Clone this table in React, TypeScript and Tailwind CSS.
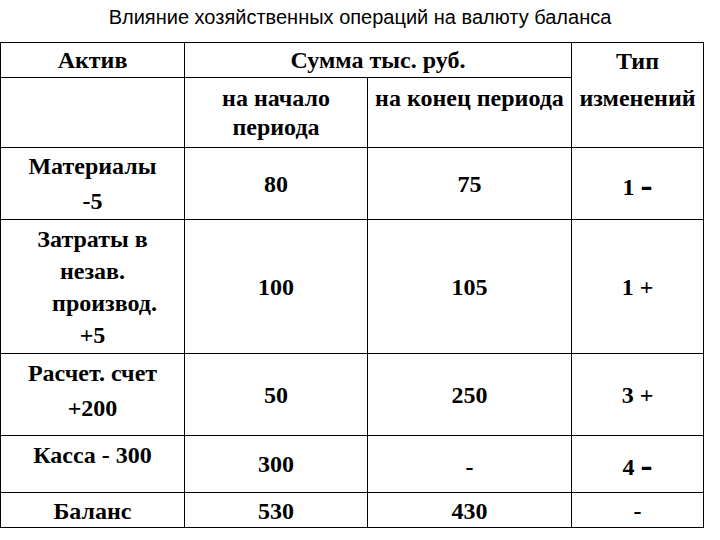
import React from 'react';

function Minus() {
  return <span className="font-bold text-[24px] font-['DejaVu_Sans',sans-serif]">–</span>;
}

export default function App() {
  const cell = 'border border-black text-center p-0';

  return (
    <div className="w-[720px] h-[540px] bg-white text-black overflow-hidden">
      {/* Title */}
      <div className="h-[42px] pt-[6px] text-center text-[20px] leading-[22px] font-['Liberation_Sans',Arial,sans-serif]">
        Влияние хозяйственных операций на валюту баланса
      </div>

      <table className="w-[703px] table-fixed border-collapse font-bold text-[24px] font-['Liberation_Serif','Times_New_Roman',serif]">
        <colgroup>
          <col className="w-[184px]" />
          <col className="w-[183px]" />
          <col className="w-[204px]" />
          <col className="w-[132px]" />
        </colgroup>
        <tbody>
          {/* Header row 1 */}
          <tr>
            <td className={`${cell} h-[35px] align-middle leading-[28px]`}>Актив</td>
            <td colSpan={2} className={`${cell} h-[35px] align-middle leading-[28px]`}>Сумма тыс. руб.</td>
            <td rowSpan={2} className={`${cell} align-top leading-[28px]`}>
              <div className="h-[35px] flex items-center justify-center">Тип</div>
              <div className="pt-[6px]">изменений</div>
            </td>
          </tr>
          {/* Header row 2 */}
          <tr>
            <td className={`${cell} h-[70px]`}></td>
            <td className={`${cell} h-[70px] align-top pt-[6px] leading-[29px]`}>
              на начало
              <br />
              периода
            </td>
            <td className={`${cell} h-[70px] align-top pt-[6px] leading-[29px]`}>на конец периода</td>
          </tr>

          {/* Материалы */}
          <tr>
            <td className={`${cell} h-[72px] align-middle leading-[35px]`}>
              Материалы
              <br />
              -5
            </td>
            <td className={`${cell} h-[72px] align-middle`}>80</td>
            <td className={`${cell} h-[72px] align-middle`}>75</td>
            <td className={`${cell} h-[72px] align-middle pt-[6px]`}>
              1 <Minus />
            </td>
          </tr>

          {/* Затраты */}
          <tr>
            <td className={`${cell} h-[134px] align-middle leading-[32px]`}>
              Затраты в
              <br />
              незав.
              <br />
              <span className="pl-[24px]">производ.</span>
              <br />
              +5
            </td>
            <td className={`${cell} h-[134px] align-middle`}>100</td>
            <td className={`${cell} h-[134px] align-middle`}>105</td>
            <td className={`${cell} h-[134px] align-middle`}>1 +</td>
          </tr>

          {/* Расчет. счет */}
          <tr>
            <td className={`${cell} h-[82px] align-middle leading-[35px] pb-[8px]`}>
              Расчет. счет
              <br />
              +200
            </td>
            <td className={`${cell} h-[82px] align-middle`}>50</td>
            <td className={`${cell} h-[82px] align-middle`}>250</td>
            <td className={`${cell} h-[82px] align-middle`}>3 +</td>
          </tr>

          {/* Касса */}
          <tr>
            <td className={`${cell} h-[57px] align-top pt-[3px] leading-[32px]`}>Касса - 300</td>
            <td className={`${cell} h-[57px] align-middle`}>300</td>
            <td className={`${cell} h-[57px] align-middle pt-[6px]`}>-</td>
            <td className={`${cell} h-[57px] align-middle pt-[6px]`}>
              4 <Minus />
            </td>
          </tr>

          {/* Баланс */}
          <tr>
            <td className={`${cell} h-[35px] align-middle leading-[28px] pt-[2px]`}>Баланс</td>
            <td className={`${cell} h-[35px] align-middle leading-[28px] pt-[2px]`}>530</td>
            <td className={`${cell} h-[35px] align-middle leading-[28px] pt-[2px]`}>430</td>
            <td className={`${cell} h-[35px] align-middle leading-[28px] pt-[2px]`}>-</td>
          </tr>
        </tbody>
      </table>
    </div>
  );
}
